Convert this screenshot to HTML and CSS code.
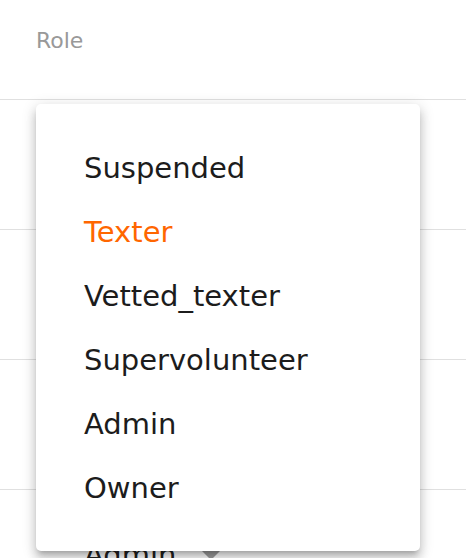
FILE: index.html
```html
<!DOCTYPE html>
<html lang="en">
<head>
<meta charset="utf-8">
<title>Role</title>
<link rel="stylesheet" href="styles.css">
</head>
<body>
<div class="page">
  <div class="table">
    <div class="head">Role</div>
    <div class="row"></div>
    <div class="row"></div>
    <div class="row"></div>
    <div class="row">
      <div class="select"><span>Admin</span><svg class="caret" viewBox="0 0 20 10"><path d="M0 0l10 10 10-10z"/></svg></div>
    </div>
  </div>
  <ul class="menu">
    <li class="item">Suspended</li>
    <li class="item active">Texter</li>
    <li class="item">Vetted_texter</li>
    <li class="item">Supervolunteer</li>
    <li class="item">Admin</li>
    <li class="item">Owner</li>
  </ul>
</div>
</body>
</html>
```

FILE: styles.css
```css
html, body {
  margin: 0;
  padding: 0;
  background: #ffffff;
  font-family: "DejaVu Sans", "Noto Sans", sans-serif;
}

.page {
  position: relative;
  width: 466px;
  height: 558px;
  overflow: hidden;
}

.table {
  display: flex;
  flex-direction: column;
}

.head {
  height: 100px;
  flex: none;
  box-sizing: border-box;
  padding: 29px 0 0 36px;
  font-size: 22px;
  line-height: 24px;
  color: #999999;
  border-bottom: 1px solid #e0e0e0;
}

.row {
  height: 130px;
  flex: none;
  box-sizing: border-box;
  border-bottom: 1px solid #e0e0e0;
  display: flex;
  align-items: center;
  padding-left: 84px;
}

.select {
  display: flex;
  align-items: center;
  gap: 25px;
  font-size: 29px;
  line-height: 34px;
  color: #212121;
}

.caret {
  width: 20px;
  height: 10px;
  fill: #9e9e9e;
}

.menu {
  position: absolute;
  left: 36px;
  top: 104px;
  width: 384px;
  margin: 0;
  padding: 32px 0 31px;
  list-style: none;
  background: #ffffff;
  border-radius: 5px;
  box-shadow: 0 5px 5px -3px rgba(0,0,0,0.2), 0 8px 10px 1px rgba(0,0,0,0.14), 0 3px 14px 2px rgba(0,0,0,0.12);
}

.item {
  height: 64px;
  line-height: 64px;
  padding-left: 48px;
  font-size: 29px;
  color: #1c1c1c;
  white-space: nowrap;
}

.item.active {
  color: #ff6600;
}
```
